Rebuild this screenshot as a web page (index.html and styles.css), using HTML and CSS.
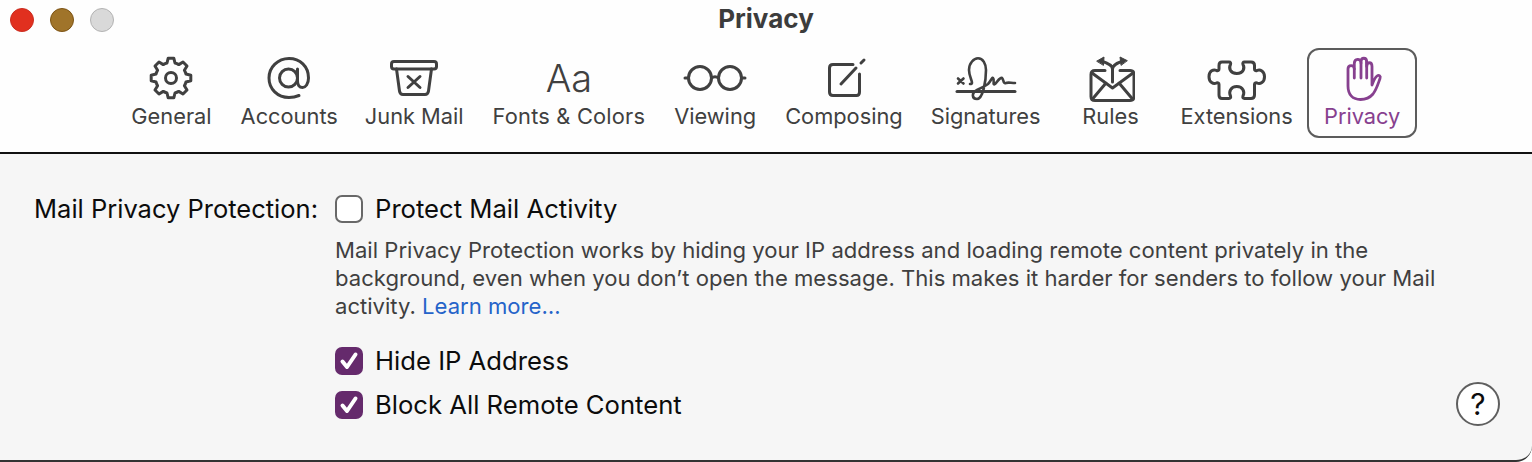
FILE: index.html
```html
<!DOCTYPE html>
<html lang="en">
<head>
    <meta charset="utf-8" />
    <title>Privacy</title>
    <link rel="stylesheet" href="styles.css">
</head>
<body>
    <div class="window">
        <header class="titlebar">
            <div class="traffic-lights">
                <span class="light light-close"></span>
                <span class="light light-min"></span>
                <span class="light light-zoom"></span>
            </div>
            <h1 class="window-title">Privacy</h1>
            <nav class="toolbar">
                <div class="tool">
                    <svg class="tool-icon" width="48" height="48" viewBox="0 0 48 48">
                        <path d="M20 9 21.2 4.2H26.8L28 9A15.5 15.5 0 0 1 31.75 10.6L36 8 40 12 37.4 16.25A15.5 15.5 0 0 1 39 20L43.8 21.2V26.8L39 28A15.5 15.5 0 0 1 37.4 31.75L40 36 36 40 31.75 37.4A15.5 15.5 0 0 1 28 39L26.8 43.8H21.2L20 39A15.5 15.5 0 0 1 16.25 37.4L12 40 8 36 10.6 31.75A15.5 15.5 0 0 1 9 28L4.2 26.8V21.2L9 20A15.5 15.5 0 0 1 10.6 16.25L8 12 12 8 16.25 10.6A15.5 15.5 0 0 1 20 9Z"/>
                        <circle cx="24" cy="24" r="5.5"/>
                    </svg>
                    <span class="tool-label">General</span>
                </div>
                <div class="tool">
                    <svg class="tool-icon" width="48" height="48" viewBox="0 0 48 48">
                        <circle cx="23.5" cy="24" r="9"/>
                        <path d="M32.5 15V27C32.5 31 34.5 33.5 37.5 33.5S43.5 30 43.5 24C43.5 12.5 35 4.5 24 4.5S4 13 4 24 12.5 43.5 24 43.5C28 43.5 31 42.8 34 41.5"/>
                    </svg>
                    <span class="tool-label">Accounts</span>
                </div>
                <div class="tool tool-junk">
                    <svg class="tool-icon" width="48" height="48" viewBox="0 0 48 48">
                        <rect x="1.5" y="7.500" width="45" height="7.500" rx="2.500"/>
                        <path d="M6.500 15 9.500 37C9.800 39 11 40.500 13 40.500H35C37 40.500 38.200 39 38.500 37L41.500 15"/>
                        <path d="M18 22.500 30 33.500M30 22.500 18 33.500"/>
                    </svg>
                    <span class="tool-label">Junk Mail</span>
                </div>
                <div class="tool tool-fonts">
                    <span class="tool-glyph">Aa</span>
                    <span class="tool-label">Fonts &amp; Colors</span>
                </div>
                <div class="tool">
                    <svg class="tool-icon" width="64" height="48" viewBox="0 0 64 48">
                        <circle cx="17" cy="24" r="11.5"/>
                        <circle cx="47" cy="24" r="11.5"/>
                        <path d="M28.5 24Q32 21.5 35.5 24M2 24H5.5M58.5 24H62"/>
                    </svg>
                    <span class="tool-label">Viewing</span>
                </div>
                <div class="tool tool-compose">
                    <svg class="tool-icon" width="48" height="48" viewBox="0 0 48 48">
                        <path d="M33 10.500H13C10.500 10.500 9.500 12 9.500 14V38C9.500 40 10.500 41.500 13 41.500H36.500C38.500 41.500 39.500 40 39.500 38V20"/>
                        <path d="M21 30 36 14M41 9 44 6"/>
                    </svg>
                    <span class="tool-label">Composing</span>
                </div>
                <div class="tool">
                    <svg class="tool-icon" width="62" height="48" viewBox="0 0 62 48">
                        <path d="M2 37.500H60"/>
                        <path class="thin" d="M3 24.500 8.500 29.500M8.500 24.500 3 29.500"/>
                        <path class="thin" d="M15 30C20 30 14 24 14 16 14 9 19 4.300 23 4.300 28 4.300 31 10 31 16 31 27 28 45 22 45 17 45 16 39 22 36 28 33 30 32 33 30 36 27 37 23 38 24 40 26 37 32 40 30 43 27 45 23 47 24 49 26 48 30 51 29 53 28 56 29 60 29"/>
                    </svg>
                    <span class="tool-label">Signatures</span>
                </div>
                <div class="tool tool-rules">
                    <svg class="tool-icon" width="48" height="48" viewBox="0 0 48 48">
                        <path d="M18 16.500H8C5.500 16.500 4 18 4 20.500V42.500C4 45 5.500 46.500 8 46.500H43C45.500 46.500 47 45 47 42.500V20.500C47 18 45.500 16.500 43 16.500H33"/>
                        <path d="M5 19 25.500 34 46 19M5.500 45 19 29M45.500 45 32 29"/>
                        <path d="M25.500 28V15C25.500 11 21 9 14 7M25.500 15C25.500 11 30 9 36 7"/>
                        <path class="solid" d="M10 7 17 3 16.500 11ZM40 6.500 33 3 34 11Z"/>
                    </svg>
                    <span class="tool-label">Rules</span>
                </div>
                <div class="tool">
                    <svg class="tool-icon" width="62" height="48" viewBox="0 0 62 48">
                        <path d="M16 8H23C24.500 8 25 9 24.500 10.500 22.500 14 24 19.500 30.800 19.500S39 14 37 10.500C36.500 9 37 8 38.500 8H45C47.500 8 48.500 9.500 48.500 11.500V15C48.500 16.500 49.500 17 51 16.500 54 15 58.500 17 58.500 22.700S54 30.500 51 29C49.500 28.500 48.500 29 48.500 30.500V41C48.500 43 47.500 44.500 45 44.500H38.500C37 44.500 36.500 43.500 37 42 39 38 37 32.500 30.800 32.500S22.500 38 24.500 42C25 43.500 24.500 44.500 23 44.500H16C14 44.500 13 43 13 41V30.500C13 29 12 28.500 10.500 29 7.500 30.500 3 28.500 3 22.700S7.500 15 10.500 16.500C12 17 13 16.500 13 15V11.500C13 9.500 14 8 16 8Z"/>
                    </svg>
                    <span class="tool-label">Extensions</span>
                </div>
                <div class="tool tool-active">
                    <svg class="tool-icon" width="48" height="48" viewBox="0 0 48 48">
                        <path d="M10 32V15C10 10.500 16.300 10.500 16.300 15V9.500C16.300 4 23 4 23 9V8C23 3 28.700 3 28.700 8V12.500C28.700 7.500 34 7.500 34 12.500V31C35.500 27 37 23.500 39 22 41 20.500 43 22 42 24.500 40 30 38.500 35.500 35 40 32 43.500 28 45.500 22.500 45.500 15 45.500 10 41 10 32Z"/>
                        <path d="M16.300 15V24M23 9V24M28.700 8V24"/>
                    </svg>
                    <span class="tool-label">Privacy</span>
                </div>
            </nav>
        </header>

        <main class="pane">
            <div class="pref-row">
                <div class="pref-label">Mail Privacy Protection:</div>
                <div class="pref-body">
                    <label class="check">
                        <span class="box"></span>
                        Protect Mail Activity
                    </label>
                    <p class="note">
                        Mail Privacy Protection works by hiding your IP address and loading remote content privately in the<br>
                        background, even when you don’t open the message. This makes it harder for senders to follow your Mail<br>
                        activity. <a class="note-link" href="#">Learn more…</a>
                    </p>
                    <div class="check-group">
                        <label class="check">
                            <span class="box box-on">
                                <svg width="28" height="28" viewBox="0 0 28 28"><path d="M7.500 14.500 12 20 20.500 7.500"/></svg>
                            </span>
                            Hide IP Address
                        </label>
                        <label class="check">
                            <span class="box box-on">
                                <svg width="28" height="28" viewBox="0 0 28 28"><path d="M7.500 14.500 12 20 20.500 7.500"/></svg>
                            </span>
                            Block All Remote Content
                        </label>
                    </div>
                </div>
            </div>
            <button class="help-button">?</button>
        </main>
    </div>
</body>
</html>
```

FILE: styles.css
```css
* {
    margin: 0;
    padding: 0;
    box-sizing: border-box;
}

html, body {
    height: 100%;
}

body {
    font-family: "Inter", "Liberation Sans", sans-serif;
    background: #fff;
    overflow: hidden;
}

.window {
    height: 462px;
    display: flex;
    flex-direction: column;
}

.titlebar {
    position: relative;
    height: 152px;
    background: #fefefe;
    display: flex;
    flex-direction: column;
    align-items: center;
}

.traffic-lights {
    position: absolute;
    top: 8px;
    left: 10px;
    display: flex;
    gap: 16px;
}

.light {
    width: 24px;
    height: 24px;
    border-radius: 50%;
    border: 1px solid;
}

.light-close {
    background: #e1301f;
    border-color: #cb2c1f;
}

.light-min {
    background: #a0742a;
    border-color: #7d5414;
}

.light-zoom {
    background: #d9d9d9;
    border-color: #b3b3b3;
}

.window-title {
    font-size: 26px;
    font-weight: 700;
    color: #3c3c3c;
    line-height: 30px;
    margin-top: 4px;
}

.toolbar {
    display: flex;
    align-items: stretch;
    margin-top: 14px;
    margin-left: 2px;
    color: #404040;
}

.tool {
    height: 90px;
    padding: 0 14.500px;
    display: flex;
    flex-direction: column;
    align-items: center;
    justify-content: flex-start;
}

.tool-junk {
    margin-left: -2px;
}

.tool-fonts .tool-label {
    letter-spacing: 0.200px;
}

.tool-compose {
    margin-right: -1px;
}

.tool-rules {
    width: 111px;
}

.tool-icon {
    display: block;
    margin-top: 6px;
    fill: none;
    stroke: currentColor;
    stroke-width: 3;
    stroke-linecap: round;
    stroke-linejoin: round;
}

.tool-icon .thin {
    stroke-width: 2.600;
}

.tool-icon .solid {
    fill: currentColor;
    stroke-width: 1;
}

.tool-glyph {
    display: block;
    height: 48px;
    margin-top: 6px;
    font-size: 38px;
    font-weight: 350;
    line-height: 48px;
}

.tool-label {
    font-size: 21.800px;
    line-height: 28px;
    white-space: nowrap;
}

.tool-active {
    width: 110px;
    padding: 0;
    border: 2px solid #5c5c5c;
    border-radius: 12px;
    color: #87408f;
}

.tool-active .tool-icon {
    stroke-width: 2.800;
    margin-top: 4px;
}

.pane {
    position: relative;
    flex: 1;
    background: #f6f6f6;
    border-top: 2px solid #111;
    border-bottom: 2px solid #333;
    border-bottom-right-radius: 16px;
}

.pref-row {
    display: flex;
    padding-top: 40px;
}

.pref-label {
    width: 318px;
    text-align: right;
    font-size: 25.500px;
    line-height: 30px;
    color: #0c0c0c;
    white-space: nowrap;
}

.pref-body {
    padding-left: 17px;
}

.check {
    display: flex;
    align-items: center;
    gap: 12px;
    font-size: 25.650px;
    line-height: 30px;
    color: #0c0c0c;
    white-space: nowrap;
}

.box {
    width: 28px;
    height: 28px;
    border: 2px solid #686868;
    border-radius: 7px;
    background: #fff;
    flex: none;
}

.box-on {
    background: #652a6c;
    border: none;
}

.box-on svg {
    display: block;
    fill: none;
    stroke: #fff;
    stroke-width: 4;
    stroke-linecap: round;
    stroke-linejoin: round;
}

.note {
    margin-top: 12px;
    font-size: 22.100px;
    line-height: 28px;
    color: #3f3f3f;
    white-space: nowrap;
}

.note-link {
    color: #2563c9;
    text-decoration: none;
}

.check-group {
    margin-top: 26px;
    display: flex;
    flex-direction: column;
    gap: 14px;
}

.help-button {
    position: absolute;
    right: 32px;
    bottom: 34px;
    width: 44px;
    height: 44px;
    border: 2px solid #5f5f5f;
    border-radius: 50%;
    background: #fff;
    color: #0c0c0c;
    font-family: inherit;
    font-size: 30px;
    font-weight: 400;
    line-height: 36px;
}
```
